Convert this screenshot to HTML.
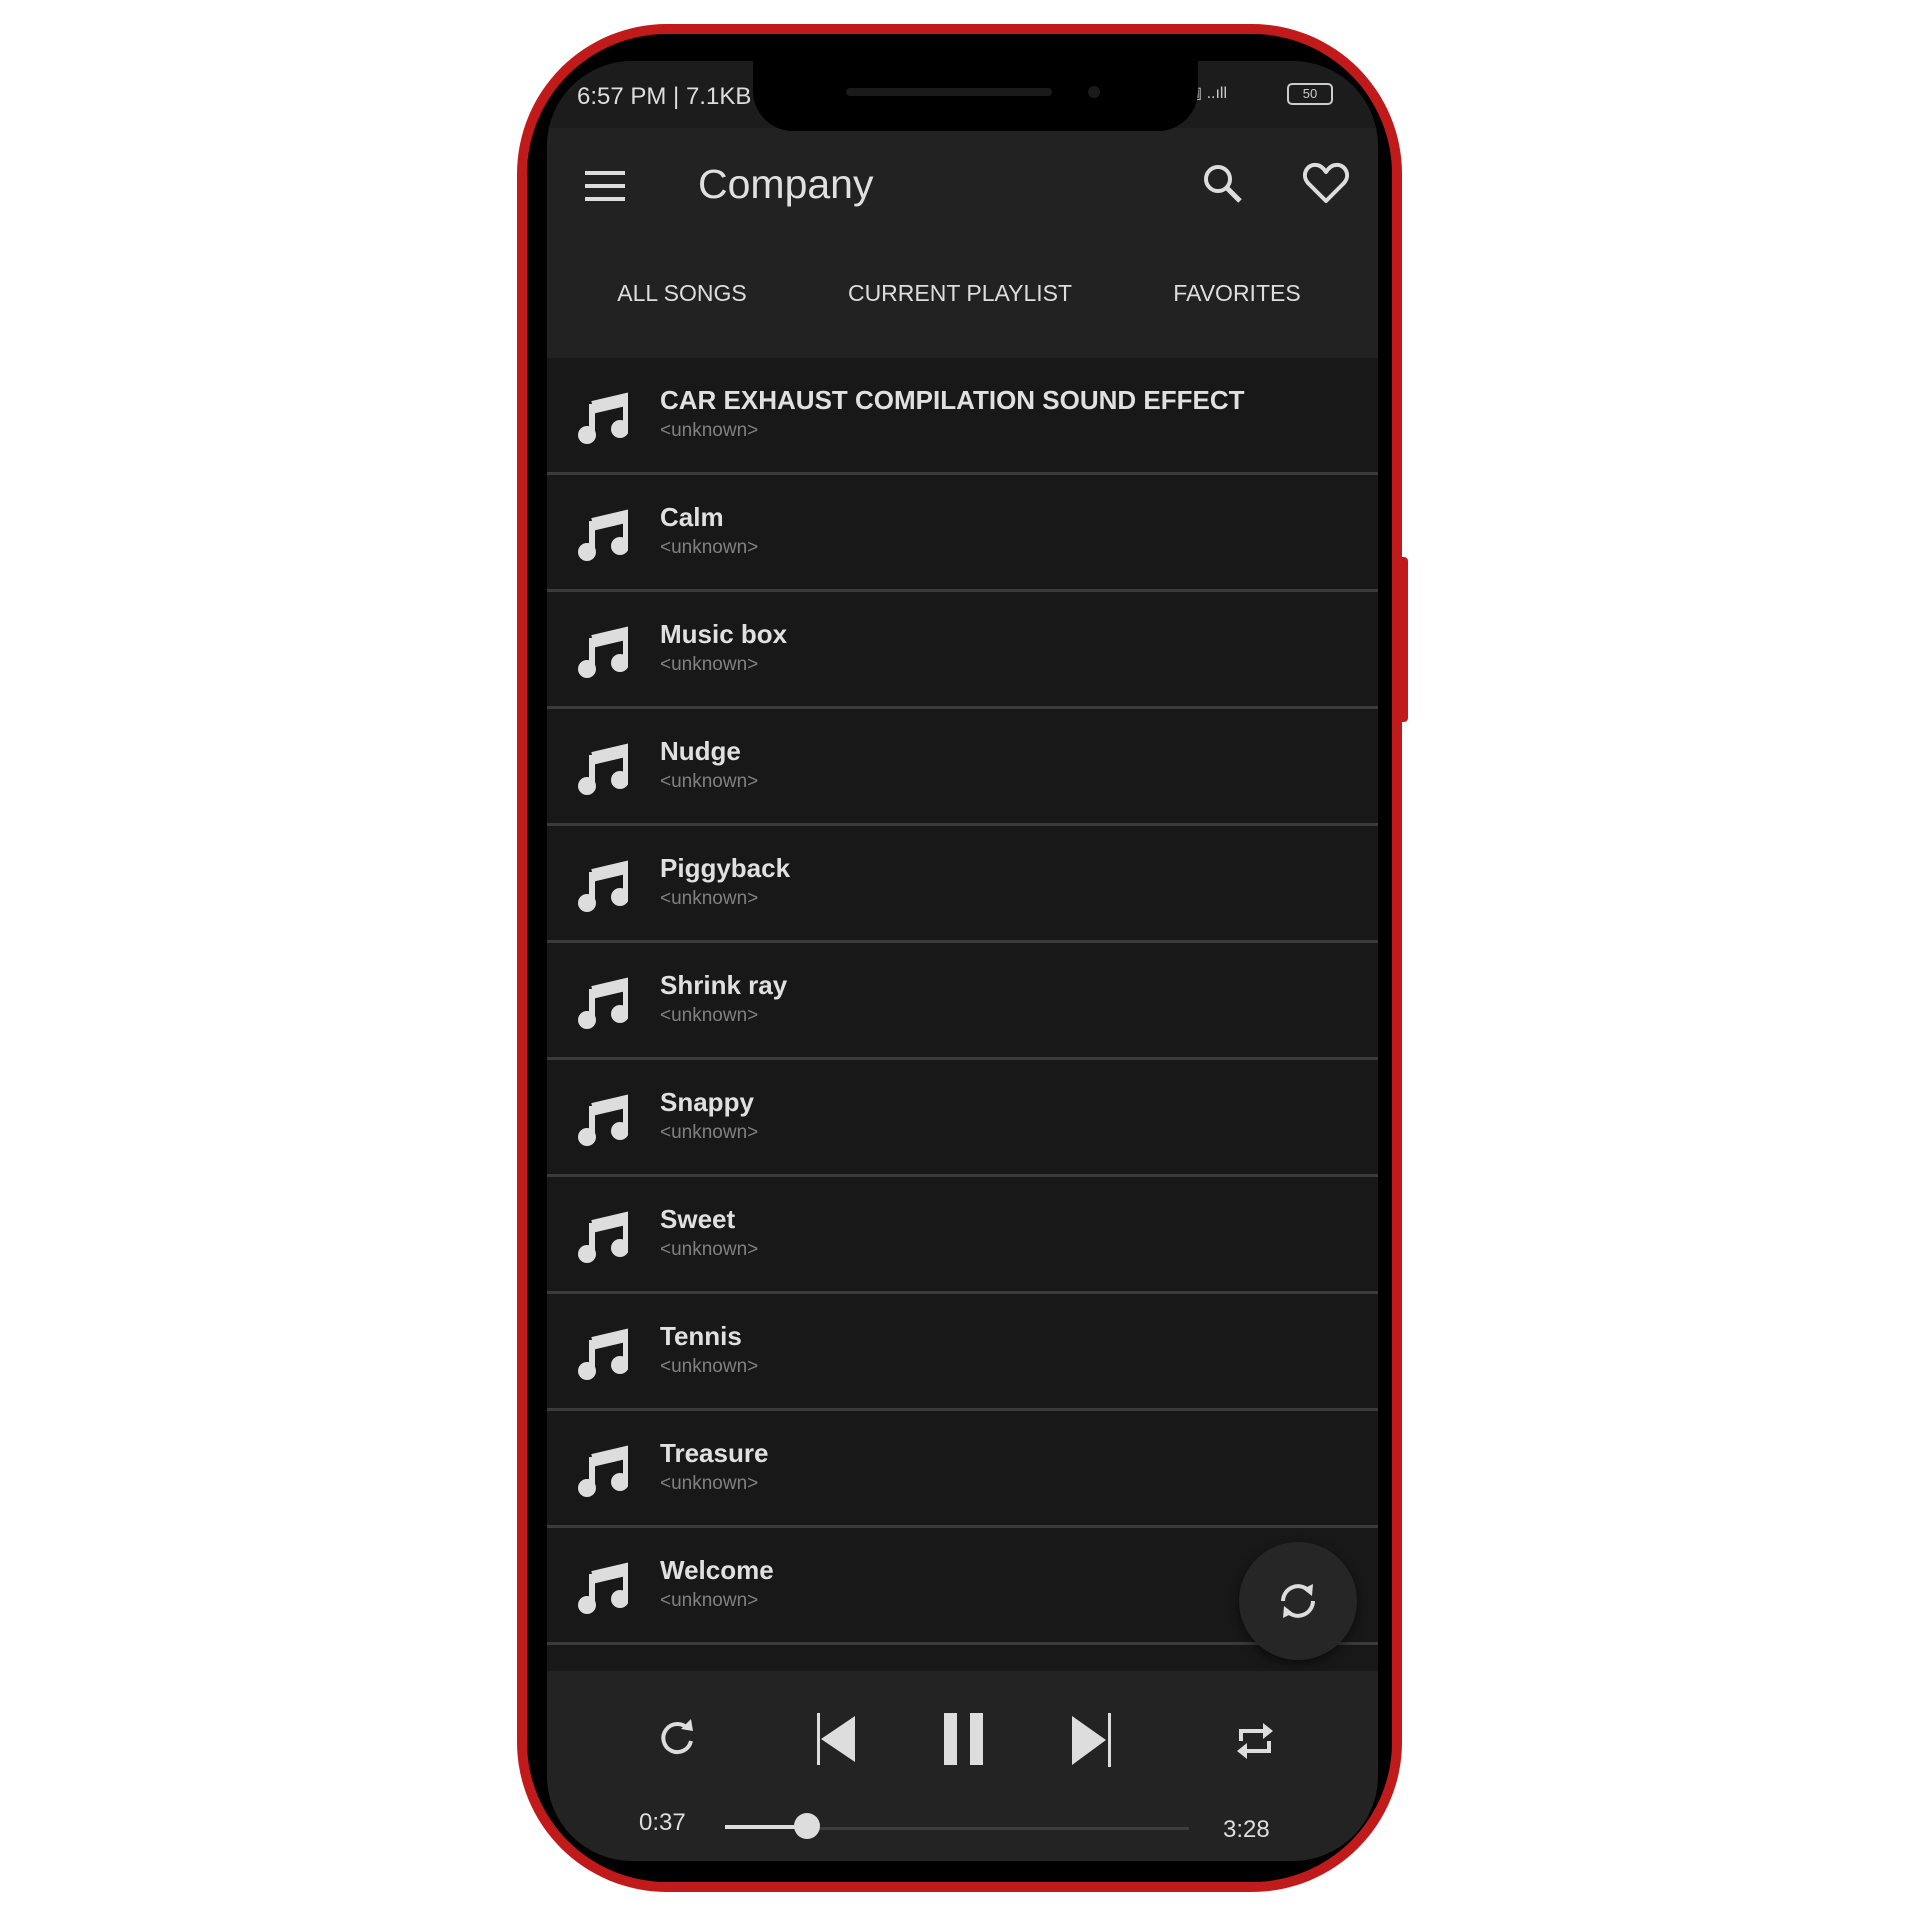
<!DOCTYPE html>
<html><head><meta charset="utf-8"><style>
*{margin:0;padding:0;box-sizing:border-box}
body{width:1920px;height:1920px;background:#fff;position:relative;overflow:hidden;font-family:"Liberation Sans",sans-serif}
.abs{position:absolute}
.red{left:517px;top:24px;width:885px;height:1868px;background:#c01a1a;border-radius:150px}
.bez{left:527px;top:34px;width:865px;height:1848px;background:#000;border-radius:140px}
.scr{left:547px;top:61px;width:831px;height:1800px;background:#181818;border-radius:85px;overflow:hidden}
.side{left:1400px;top:557px;width:8px;height:165px;background:#c01a1a;border-radius:0 4px 4px 0}
.status{left:0;top:0;width:831px;height:67px;background:#1c1c1c}
.appbar{left:0;top:67px;width:831px;height:230px;background:#222}
.t{color:#ddd;position:absolute;white-space:nowrap}
.row{position:absolute;left:0;width:831px;height:117px;border-bottom:3px solid #3a3a3a}
.row .ti{position:absolute;left:113px;top:27px;font-size:26px;font-weight:bold;color:#e0e0e0}
.row .su{position:absolute;left:113px;top:62px;font-size:19px;color:#808080}
.row svg{position:absolute;left:31px;top:34px}
.player{left:0;top:1610px;width:831px;height:190px;background:#232323}
</style></head><body>
<div class="abs red"></div>
<div class="abs side"></div>
<div class="abs bez"></div>
<div class="abs scr">
 <div class="abs status"></div>
 <div class="t" style="left:30px;top:22px;font-size:24px;color:#ddd">6:57 PM | 7.1KB</div>
 <div class="t" style="left:640px;top:22px;font-size:16px;color:#ccc">▣ ..ıll</div>
 <div class="abs" style="left:740px;top:22px;width:46px;height:22px;border:2px solid #ccc;border-radius:5px;color:#ccc;font-size:13px;text-align:center;line-height:18px">50</div>
 <div class="abs appbar"></div>
 <svg class="abs" style="left:38px;top:108px" width="42" height="34" viewBox="0 0 42 34"><rect y="2" width="40" height="4" fill="#ddd"/><rect y="15" width="40" height="4" fill="#ddd"/><rect y="28" width="40" height="4" fill="#ddd"/></svg>
 <div class="t" style="left:151px;top:100px;font-size:41px;color:#e0e0e0">Company</div>
 <svg class="abs" style="left:655px;top:102px" width="42" height="42" viewBox="0 0 42 42"><circle cx="16" cy="16" r="12" fill="none" stroke="#ddd" stroke-width="4"/><line x1="25" y1="25" x2="38" y2="38" stroke="#ddd" stroke-width="5"/></svg>
 <svg class="abs" style="left:756px;top:101px" width="46" height="42" viewBox="0 0 46 42"><path d="M23 39 L5 21 C-2 13 4 2 13 3 C18 3 21 7 23 10 C25 7 28 3 33 3 C42 2 48 13 41 21 Z" fill="none" stroke="#ddd" stroke-width="4" stroke-linejoin="round"/></svg>
 <div class="t" style="left:135px;top:219px;font-size:23px;width:0;text-align:center"><span style="position:absolute;transform:translateX(-50%)">ALL SONGS</span></div>
 <div class="t" style="left:413px;top:219px;font-size:23px;width:0"><span style="position:absolute;transform:translateX(-50%)">CURRENT PLAYLIST</span></div>
 <div class="t" style="left:690px;top:219px;font-size:23px;width:0"><span style="position:absolute;transform:translateX(-50%)">FAVORITES</span></div>

 <div id="list"></div>
 <div class="row" style="top:297px"><svg width="50" height="52" viewBox="0 0 50 52"><path d="M14 12 L48 4 L48 40" stroke="#ddd" stroke-width="6" fill="none"/><path d="M14 12 L48 4 L48 14 L14 22Z" fill="#ddd"/><path d="M14 12 L14 44" stroke="#ddd" stroke-width="6"/><circle cx="9" cy="43" r="9" fill="#ddd"/><circle cx="42" cy="37" r="9" fill="#ddd"/></svg><div class="ti">CAR EXHAUST COMPILATION SOUND EFFECT</div><div class="su">&lt;unknown&gt;</div></div>
 <div class="row" style="top:414px"><svg width="50" height="52" viewBox="0 0 50 52"><path d="M14 12 L48 4 L48 40" stroke="#ddd" stroke-width="6" fill="none"/><path d="M14 12 L48 4 L48 14 L14 22Z" fill="#ddd"/><path d="M14 12 L14 44" stroke="#ddd" stroke-width="6"/><circle cx="9" cy="43" r="9" fill="#ddd"/><circle cx="42" cy="37" r="9" fill="#ddd"/></svg><div class="ti">Calm</div><div class="su">&lt;unknown&gt;</div></div>
 <div class="row" style="top:531px"><svg width="50" height="52" viewBox="0 0 50 52"><path d="M14 12 L48 4 L48 40" stroke="#ddd" stroke-width="6" fill="none"/><path d="M14 12 L48 4 L48 14 L14 22Z" fill="#ddd"/><path d="M14 12 L14 44" stroke="#ddd" stroke-width="6"/><circle cx="9" cy="43" r="9" fill="#ddd"/><circle cx="42" cy="37" r="9" fill="#ddd"/></svg><div class="ti">Music box</div><div class="su">&lt;unknown&gt;</div></div>
 <div class="row" style="top:648px"><svg width="50" height="52" viewBox="0 0 50 52"><path d="M14 12 L48 4 L48 40" stroke="#ddd" stroke-width="6" fill="none"/><path d="M14 12 L48 4 L48 14 L14 22Z" fill="#ddd"/><path d="M14 12 L14 44" stroke="#ddd" stroke-width="6"/><circle cx="9" cy="43" r="9" fill="#ddd"/><circle cx="42" cy="37" r="9" fill="#ddd"/></svg><div class="ti">Nudge</div><div class="su">&lt;unknown&gt;</div></div>
 <div class="row" style="top:765px"><svg width="50" height="52" viewBox="0 0 50 52"><path d="M14 12 L48 4 L48 40" stroke="#ddd" stroke-width="6" fill="none"/><path d="M14 12 L48 4 L48 14 L14 22Z" fill="#ddd"/><path d="M14 12 L14 44" stroke="#ddd" stroke-width="6"/><circle cx="9" cy="43" r="9" fill="#ddd"/><circle cx="42" cy="37" r="9" fill="#ddd"/></svg><div class="ti">Piggyback</div><div class="su">&lt;unknown&gt;</div></div>
 <div class="row" style="top:882px"><svg width="50" height="52" viewBox="0 0 50 52"><path d="M14 12 L48 4 L48 40" stroke="#ddd" stroke-width="6" fill="none"/><path d="M14 12 L48 4 L48 14 L14 22Z" fill="#ddd"/><path d="M14 12 L14 44" stroke="#ddd" stroke-width="6"/><circle cx="9" cy="43" r="9" fill="#ddd"/><circle cx="42" cy="37" r="9" fill="#ddd"/></svg><div class="ti">Shrink ray</div><div class="su">&lt;unknown&gt;</div></div>
 <div class="row" style="top:999px"><svg width="50" height="52" viewBox="0 0 50 52"><path d="M14 12 L48 4 L48 40" stroke="#ddd" stroke-width="6" fill="none"/><path d="M14 12 L48 4 L48 14 L14 22Z" fill="#ddd"/><path d="M14 12 L14 44" stroke="#ddd" stroke-width="6"/><circle cx="9" cy="43" r="9" fill="#ddd"/><circle cx="42" cy="37" r="9" fill="#ddd"/></svg><div class="ti">Snappy</div><div class="su">&lt;unknown&gt;</div></div>
 <div class="row" style="top:1116px"><svg width="50" height="52" viewBox="0 0 50 52"><path d="M14 12 L48 4 L48 40" stroke="#ddd" stroke-width="6" fill="none"/><path d="M14 12 L48 4 L48 14 L14 22Z" fill="#ddd"/><path d="M14 12 L14 44" stroke="#ddd" stroke-width="6"/><circle cx="9" cy="43" r="9" fill="#ddd"/><circle cx="42" cy="37" r="9" fill="#ddd"/></svg><div class="ti">Sweet</div><div class="su">&lt;unknown&gt;</div></div>
 <div class="row" style="top:1233px"><svg width="50" height="52" viewBox="0 0 50 52"><path d="M14 12 L48 4 L48 40" stroke="#ddd" stroke-width="6" fill="none"/><path d="M14 12 L48 4 L48 14 L14 22Z" fill="#ddd"/><path d="M14 12 L14 44" stroke="#ddd" stroke-width="6"/><circle cx="9" cy="43" r="9" fill="#ddd"/><circle cx="42" cy="37" r="9" fill="#ddd"/></svg><div class="ti">Tennis</div><div class="su">&lt;unknown&gt;</div></div>
 <div class="row" style="top:1350px"><svg width="50" height="52" viewBox="0 0 50 52"><path d="M14 12 L48 4 L48 40" stroke="#ddd" stroke-width="6" fill="none"/><path d="M14 12 L48 4 L48 14 L14 22Z" fill="#ddd"/><path d="M14 12 L14 44" stroke="#ddd" stroke-width="6"/><circle cx="9" cy="43" r="9" fill="#ddd"/><circle cx="42" cy="37" r="9" fill="#ddd"/></svg><div class="ti">Treasure</div><div class="su">&lt;unknown&gt;</div></div>
 <div class="row" style="top:1467px"><svg width="50" height="52" viewBox="0 0 50 52"><path d="M14 12 L48 4 L48 40" stroke="#ddd" stroke-width="6" fill="none"/><path d="M14 12 L48 4 L48 14 L14 22Z" fill="#ddd"/><path d="M14 12 L14 44" stroke="#ddd" stroke-width="6"/><circle cx="9" cy="43" r="9" fill="#ddd"/><circle cx="42" cy="37" r="9" fill="#ddd"/></svg><div class="ti">Welcome</div><div class="su">&lt;unknown&gt;</div></div>

 <div class="abs" style="left:692px;top:1481px;width:118px;height:118px;border-radius:50%;background:#262626;box-shadow:0 4px 10px rgba(0,0,0,.5)"></div>
 <svg class="abs" style="left:728px;top:1518px" width="46" height="44" viewBox="0 0 46 44"><path d="M8 22 A15 15 0 0 1 34 12" fill="none" stroke="#ddd" stroke-width="4"/><path d="M38 22 A15 15 0 0 1 12 32" fill="none" stroke="#ddd" stroke-width="4"/><path d="M28 10 L38 5 L37 17Z" fill="#ddd"/><path d="M18 34 L8 39 L9 27Z" fill="#ddd"/></svg>

 <div class="abs player"></div>
 <svg class="abs" style="left:110px;top:1656px" width="40" height="40" viewBox="0 0 40 40"><path d="M31 12 A14 14 0 1 0 34 24" fill="none" stroke="#ddd" stroke-width="4"/><path d="M24 12 L36 14 L34 2Z" fill="#ddd"/></svg>
 <svg class="abs" style="left:268px;top:1650px" width="44" height="56" viewBox="0 0 44 56"><rect x="2" y="2" width="3" height="52" fill="#ddd"/><path d="M6 28 L40 5 L40 51Z" fill="#ddd"/></svg>
 <div class="abs" style="left:397px;top:1652px;width:13px;height:52px;background:#ddd"></div>
 <div class="abs" style="left:423px;top:1652px;width:13px;height:52px;background:#ddd"></div>
 <svg class="abs" style="left:523px;top:1650px" width="44" height="58" viewBox="0 0 44 58"><path d="M2 5 L36 29 L2 54Z" fill="#ddd"/><rect x="38" y="2" width="3" height="54" fill="#ddd"/></svg>
 <svg class="abs" style="left:688px;top:1658px" width="40" height="44" viewBox="0 0 40 44"><path d="M6 22 L6 12 L30 12" fill="none" stroke="#ddd" stroke-width="4"/><path d="M28 4 L38 12 L28 20Z" fill="#ddd"/><path d="M34 22 L34 32 L10 32" fill="none" stroke="#ddd" stroke-width="4"/><path d="M12 24 L2 32 L12 40Z" fill="#ddd"/></svg>
 <div class="t" style="left:92px;top:1748px;font-size:24px">0:37</div>
 <div class="abs" style="left:178px;top:1764px;width:82px;height:4px;background:#ddd"></div>
 <div class="abs" style="left:260px;top:1766px;width:382px;height:3px;background:#3c3c3c"></div>
 <div class="abs" style="left:247px;top:1752px;width:26px;height:26px;border-radius:50%;background:#ddd"></div>
 <div class="t" style="left:676px;top:1755px;font-size:24px">3:28</div>
</div>
<div class="abs" style="left:753px;top:50px;width:445px;height:81px;background:#000;border-radius:0 0 40px 40px"></div>
<div class="abs" style="left:846px;top:88px;width:206px;height:8px;background:#1a1a1a;border-radius:4px"></div>
<div class="abs" style="left:1088px;top:86px;width:12px;height:12px;background:#1a1a1a;border-radius:50%"></div>
</body></html>
